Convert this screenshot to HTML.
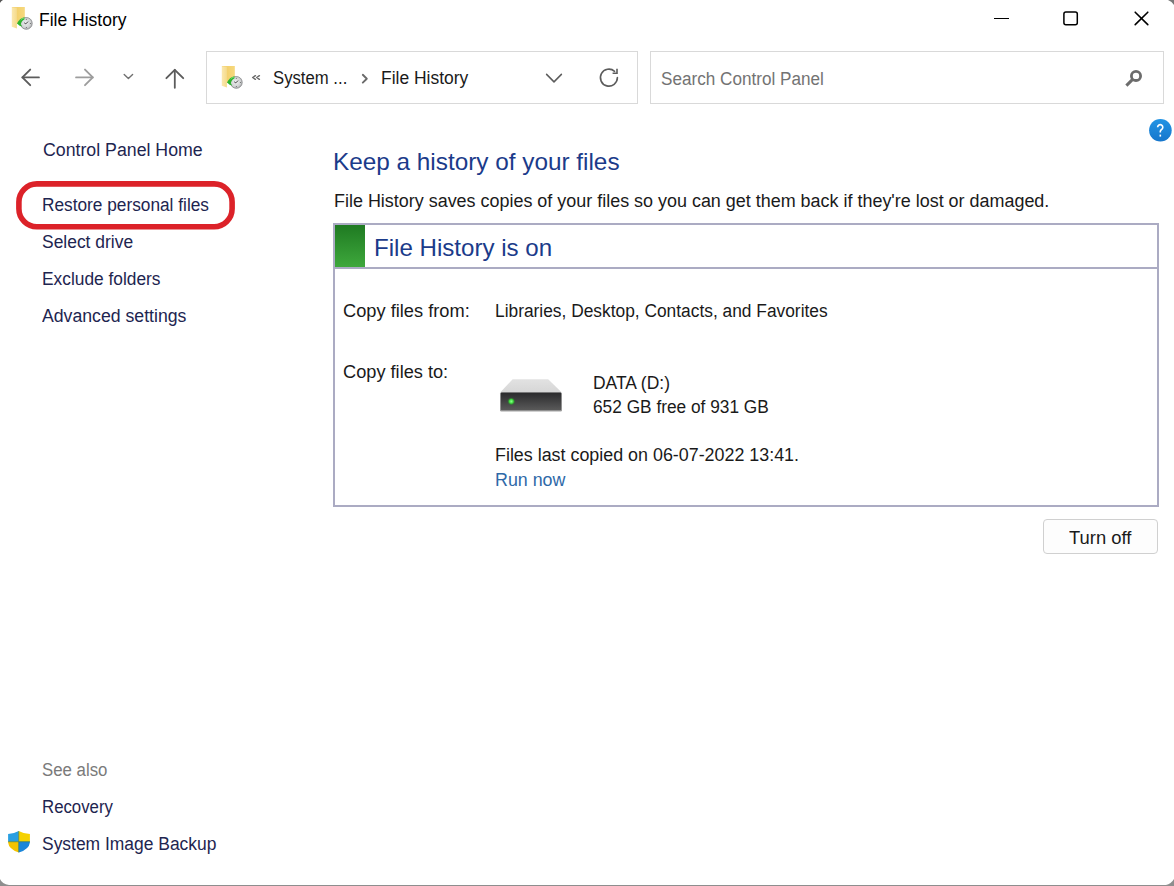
<!DOCTYPE html>
<html><head><meta charset="utf-8"><title>File History</title>
<style>
html,body{margin:0;padding:0;background:#fff;width:1174px;height:886px;overflow:hidden;position:relative}
.t{position:absolute;font-family:"Liberation Sans",sans-serif;white-space:nowrap;transform-origin:0 0}
.a{position:absolute}
</style></head><body>
<!-- address box -->
<div class="a" style="left:206px;top:51px;width:430px;height:51px;border:1px solid #d9d9d9"></div>
<!-- search box -->
<div class="a" style="left:650px;top:51px;width:512px;height:51px;border:1px solid #d9d9d9"></div>
<!-- content box -->
<div class="a" style="left:333px;top:223px;width:822px;height:280px;border:2px solid #ababc3"></div>
<div class="a" style="left:335px;top:267px;width:822px;height:2px;background:#ababc3"></div>
<div class="a" style="left:335px;top:225px;width:30px;height:42px;background:linear-gradient(#1f7a22,#3ea83c)"></div>
<!-- turn off button -->
<div class="a" style="left:1043px;top:519px;width:113px;height:33px;border:1px solid #d0d0d0;border-radius:4px;background:#fdfdfd"></div>
<!-- red highlight -->
<svg class="a" style="left:0;top:170px" width="250" height="70" viewBox="0 170 250 70"><rect x="18.9" y="183.9" width="213.2" height="42.8" rx="18" fill="none" stroke="#dc2229" stroke-width="5.6"/></svg>
<svg class="a" style="left:6.4px;top:2.8px" width="32" height="30" viewBox="0 0 32 30">
<defs>
<linearGradient id="fbt" x1="0" x2="1" y1="0" y2="0"><stop offset="0" stop-color="#f2cc62"/><stop offset="1" stop-color="#f6d87e"/></linearGradient>
<linearGradient id="fft" x1="0" x2="1"><stop offset="0" stop-color="#fbe8ae"/><stop offset="1" stop-color="#f4da8c"/></linearGradient>
<radialGradient id="cgt" cx="0.45" cy="0.45" r="0.6"><stop offset="0" stop-color="#eef0f0"/><stop offset="0.7" stop-color="#cfd1d2"/><stop offset="1" stop-color="#9a9c9e"/></radialGradient>
</defs>
<path d="M5.8 4 L18.8 4 L18.8 21 L10.8 21 Z" fill="url(#fbt)"/>
<path d="M5.8 4.2 L10.9 4.8 L10.9 25.4 L5.8 23.8 Z" fill="url(#fft)"/>
<circle cx="20.3" cy="20.4" r="5.9" fill="url(#cgt)" stroke="#858789" stroke-width="0.8"/>
<path d="M18.2 19.8 L19.8 20.9 L22 18.6" stroke="#333" stroke-width="0.9" fill="none"/>
<circle cx="20.3" cy="16.2" r="0.5" fill="#555"/><circle cx="24.4" cy="20.4" r="0.5" fill="#555"/><circle cx="20.3" cy="24.5" r="0.5" fill="#555"/>
<path d="M11 20.6 C12.6 17 15.2 14.6 18.4 14.2 L18.4 16.4 C16.4 17.2 15 19 14.8 21.6 L16.3 23.6 L13.6 22.8 Z" fill="#2eb52e"/>
<path d="M14.3 17.4 C15.2 16.2 16.6 15.3 18.2 15" stroke="#8fe58f" stroke-width="0.7" fill="none"/>
</svg>
<svg class="a" style="left:216px;top:62px" width="32" height="30" viewBox="0 0 32 30">
<defs>
<linearGradient id="fba" x1="0" x2="1" y1="0" y2="0"><stop offset="0" stop-color="#f2cc62"/><stop offset="1" stop-color="#f6d87e"/></linearGradient>
<linearGradient id="ffa" x1="0" x2="1"><stop offset="0" stop-color="#fbe8ae"/><stop offset="1" stop-color="#f4da8c"/></linearGradient>
<radialGradient id="cga" cx="0.45" cy="0.45" r="0.6"><stop offset="0" stop-color="#eef0f0"/><stop offset="0.7" stop-color="#cfd1d2"/><stop offset="1" stop-color="#9a9c9e"/></radialGradient>
</defs>
<path d="M5.8 4 L18.8 4 L18.8 21 L10.8 21 Z" fill="url(#fba)"/>
<path d="M5.8 4.2 L10.9 4.8 L10.9 25.4 L5.8 23.8 Z" fill="url(#ffa)"/>
<circle cx="20.3" cy="20.4" r="5.9" fill="url(#cga)" stroke="#858789" stroke-width="0.8"/>
<path d="M18.2 19.8 L19.8 20.9 L22 18.6" stroke="#333" stroke-width="0.9" fill="none"/>
<circle cx="20.3" cy="16.2" r="0.5" fill="#555"/><circle cx="24.4" cy="20.4" r="0.5" fill="#555"/><circle cx="20.3" cy="24.5" r="0.5" fill="#555"/>
<path d="M11 20.6 C12.6 17 15.2 14.6 18.4 14.2 L18.4 16.4 C16.4 17.2 15 19 14.8 21.6 L16.3 23.6 L13.6 22.8 Z" fill="#2eb52e"/>
<path d="M14.3 17.4 C15.2 16.2 16.6 15.3 18.2 15" stroke="#8fe58f" stroke-width="0.7" fill="none"/>
</svg>
<svg class="a" style="left:0;top:50px" width="200" height="50" viewBox="0 50 200 50">
<g fill="none" stroke-linecap="round" stroke-linejoin="round">
<path d="M22.4 77.4 H39" stroke="#5c5c5c" stroke-width="1.7"/>
<path d="M30.2 69.6 L22.4 77.4 L30.2 85.2" stroke="#5c5c5c" stroke-width="1.9"/>
<path d="M76 77.4 H92.8" stroke="#9d9d9d" stroke-width="1.7"/>
<path d="M85 69.6 L92.8 77.4 L85 85.2" stroke="#9d9d9d" stroke-width="1.9"/>
<path d="M124.2 74.6 L128.4 78.6 L132.6 74.6" stroke="#707070" stroke-width="1.4"/>
<path d="M174.8 70 V87.8" stroke="#5c5c5c" stroke-width="1.8"/>
<path d="M166.4 78.2 L174.8 69.8 L183.2 78.2" stroke="#5c5c5c" stroke-width="1.9"/>
</g></svg>
<svg class="a" style="left:240px;top:60px" width="400" height="35" viewBox="240 60 400 35">
<g fill="none" stroke-linecap="round" stroke-linejoin="round">
<path d="M255.4 75.7 L252.7 77.5 L255.4 79.3" stroke="#6a6a6a" stroke-width="1.5"/>
<path d="M259.4 75.7 L256.7 77.5 L259.4 79.3" stroke="#6a6a6a" stroke-width="1.5"/>
<path d="M362.8 74.8 L366.8 78.7 L362.8 82.6" stroke="#6a6a6a" stroke-width="1.9"/>
<path d="M546.6 74.4 L554 81.9 L561.4 74.4" stroke="#5c5c5c" stroke-width="1.5"/>
<path d="M617.4 77.6 A8.5 8.5 0 1 1 614.6 71.3" stroke="#5c5c5c" stroke-width="1.6"/>
<path d="M612.6 73.3 H617 V68.8" stroke="#5c5c5c" stroke-width="1.6" stroke-linecap="butt" stroke-linejoin="miter"/>
</g></svg>
<svg class="a" style="left:1120px;top:65px" width="30" height="28" viewBox="1120 65 30 28">
<circle cx="1136" cy="75.9" r="4.6" fill="none" stroke="#6c6c6c" stroke-width="2.8"/>
<path d="M1132.6 79.4 L1126.4 85.6" stroke="#6c6c6c" stroke-width="3" stroke-linecap="butt"/>
</svg>
<svg class="a" style="left:980px;top:0" width="194" height="40" viewBox="980 0 194 40">
<rect x="994" y="18" width="15" height="1" fill="#000"/>
<rect x="1063.9" y="11.9" width="13.4" height="12.9" rx="2" fill="none" stroke="#000" stroke-width="1.5"/>
<path d="M1135.2 12.2 L1147.8 24.6 M1147.8 12.2 L1135.2 24.6" stroke="#000" stroke-width="1.6" stroke-linecap="round"/>
</svg>
<svg class="a" style="left:1144px;top:114px" width="30" height="32" viewBox="1144 114 30 32">
<defs><linearGradient id="hg" x1="0" y1="0" x2="0" y2="1"><stop offset="0" stop-color="#2394e4"/><stop offset="1" stop-color="#1676cc"/></linearGradient></defs>
<circle cx="1160.4" cy="130.3" r="11.3" fill="url(#hg)"/>
<path d="M1157.6 127.2 A2.6 2.6 0 1 1 1161.5 129.5 Q1160.3 130.3 1160.3 131.6 V132.6" fill="none" stroke="#fff" stroke-width="1.6"/>
<rect x="1159.5" y="134.6" width="1.6" height="2" fill="#fff"/>
</svg>
<svg class="a" style="left:0;top:0" width="1174" height="886" viewBox="0 0 1174 886">
<path d="M0 0 H3 Q1 1 0 3 Z" fill="#555"/>
<path d="M1174 0 V5 Q1172 1.5 1168 0 Z" fill="#777"/>
<path d="M0 879 Q2 884 9 885 H1166 Q1171 884 1174 879 V886 H0 Z" fill="#8e8e8e"/>
</svg>
<svg class="a" style="left:494px;top:372px" width="75" height="45" viewBox="494 372 75 45">
<defs>
<linearGradient id="dtop" x1="0" y1="0" x2="0" y2="1"><stop offset="0" stop-color="#e2e2e2"/><stop offset="1" stop-color="#d6d6d6"/></linearGradient>
<linearGradient id="dbody" x1="0" y1="0" x2="0" y2="1"><stop offset="0" stop-color="#2a2a2c"/><stop offset="1" stop-color="#5a5a5a"/></linearGradient>
<radialGradient id="led"><stop offset="0" stop-color="#8dff8d"/><stop offset="0.45" stop-color="#3fe03f"/><stop offset="1" stop-color="#1a6a1a" stop-opacity="0"/></radialGradient>
</defs>
<path d="M512.6 379.2 H548.2 L561.8 392.6 H500.2 Z" fill="url(#dtop)"/>
<rect x="500" y="392.4" width="62" height="19.2" rx="1.4" fill="#a2a2a2"/>
<rect x="500.8" y="392.6" width="60.4" height="17.6" rx="0.8" fill="url(#dbody)"/>
<circle cx="511.3" cy="401.4" r="4.2" fill="url(#led)"/>
</svg>
<svg class="a" style="left:4px;top:826px" width="30" height="30" viewBox="4 826 30 30">
<defs><clipPath id="sh"><path d="M8.1 834 Q14 833.6 18.7 830.9 Q23.4 833.6 29.9 834 V842.4 Q29.2 849 18.9 852.6 Q8.7 849 8.1 842.4 Z"/></clipPath></defs>
<g clip-path="url(#sh)">
<rect x="4" y="826" width="14.7" height="15.7" fill="#2a9fe2"/>
<rect x="18.7" y="826" width="15" height="15.7" fill="#f6d100"/>
<rect x="4" y="841.7" width="14.7" height="15" fill="#f5c400"/>
<rect x="18.7" y="841.7" width="15" height="15" fill="#1c86da"/>
<path d="M18.7 826 V856 M4 841.7 H34" stroke="#3d7a4a" stroke-width="0.9" opacity="0.8"/>
</g>
</svg>
<div class="t" style="left:39.1px;top:11.3px;font-size:18px;line-height:18px;color:#000000;transform:scaleX(0.9719)">File History</div>
<div class="t" style="left:273.0px;top:68.8px;font-size:18px;line-height:18px;color:#1a1a1a;transform:scaleX(0.9282)">System ...</div>
<div class="t" style="left:381.1px;top:68.8px;font-size:18px;line-height:18px;color:#1a1a1a;transform:scaleX(0.9697)">File History</div>
<div class="t" style="left:660.6px;top:69.7px;font-size:18px;line-height:18px;color:#737373;transform:scaleX(0.9515)">Search Control Panel</div>
<div class="t" style="left:42.6px;top:140.6px;font-size:18px;line-height:18px;color:#1e2550;transform:scaleX(0.9850)">Control Panel Home</div>
<div class="t" style="left:42.3px;top:196.0px;font-size:18px;line-height:18px;color:#1e2550;transform:scaleX(0.9590)">Restore personal files</div>
<div class="t" style="left:41.8px;top:233.4px;font-size:18px;line-height:18px;color:#1e2550;transform:scaleX(0.9685)">Select drive</div>
<div class="t" style="left:41.8px;top:269.7px;font-size:18px;line-height:18px;color:#1e2550;transform:scaleX(0.9631)">Exclude folders</div>
<div class="t" style="left:41.8px;top:306.5px;font-size:18px;line-height:18px;color:#1e2550;transform:scaleX(0.9816)">Advanced settings</div>
<div class="t" style="left:41.7px;top:761.2px;font-size:18px;line-height:18px;color:#7a7a7a;transform:scaleX(0.9338)">See also</div>
<div class="t" style="left:41.7px;top:797.8px;font-size:18px;line-height:18px;color:#1e2550;transform:scaleX(0.9333)">Recovery</div>
<div class="t" style="left:41.7px;top:834.7px;font-size:18px;line-height:18px;color:#1e2550;transform:scaleX(0.9685)">System Image Backup</div>
<div class="t" style="left:333.0px;top:150.0px;font-size:24px;line-height:24px;color:#1b3b8a;transform:scaleX(1.0132)">Keep a history of your files</div>
<div class="t" style="left:333.7px;top:191.7px;font-size:18px;line-height:18px;color:#1a1a1a;transform:scaleX(0.9966)">File History saves copies of your files so you can get them back if they&#39;re lost or damaged.</div>
<div class="t" style="left:373.6px;top:235.7px;font-size:24px;line-height:24px;color:#1b3b8a;transform:scaleX(1.0046)">File History is on</div>
<div class="t" style="left:342.6px;top:302.2px;font-size:18px;line-height:18px;color:#1a1a1a;transform:scaleX(1.0138)">Copy files from:</div>
<div class="t" style="left:495.0px;top:302.2px;font-size:18px;line-height:18px;color:#1a1a1a;transform:scaleX(0.9637)">Libraries, Desktop, Contacts, and Favorites</div>
<div class="t" style="left:342.6px;top:362.7px;font-size:18px;line-height:18px;color:#1a1a1a;transform:scaleX(1.0108)">Copy files to:</div>
<div class="t" style="left:593.2px;top:373.6px;font-size:18px;line-height:18px;color:#1a1a1a;transform:scaleX(0.9701)">DATA (D:)</div>
<div class="t" style="left:593.2px;top:398.4px;font-size:18px;line-height:18px;color:#1a1a1a;transform:scaleX(0.9602)">652 GB free of 931 GB</div>
<div class="t" style="left:494.7px;top:445.6px;font-size:18px;line-height:18px;color:#1a1a1a;transform:scaleX(0.9928)">Files last copied on 06-07-2022 13:41.</div>
<div class="t" style="left:494.7px;top:470.9px;font-size:18px;line-height:18px;color:#2e69a8;transform:scaleX(0.9914)">Run now</div>
<div class="t" style="left:1068.5px;top:528.5px;font-size:18px;line-height:18px;color:#1a1a1a;transform:scaleX(1.0213)">Turn off</div>
</body></html>
